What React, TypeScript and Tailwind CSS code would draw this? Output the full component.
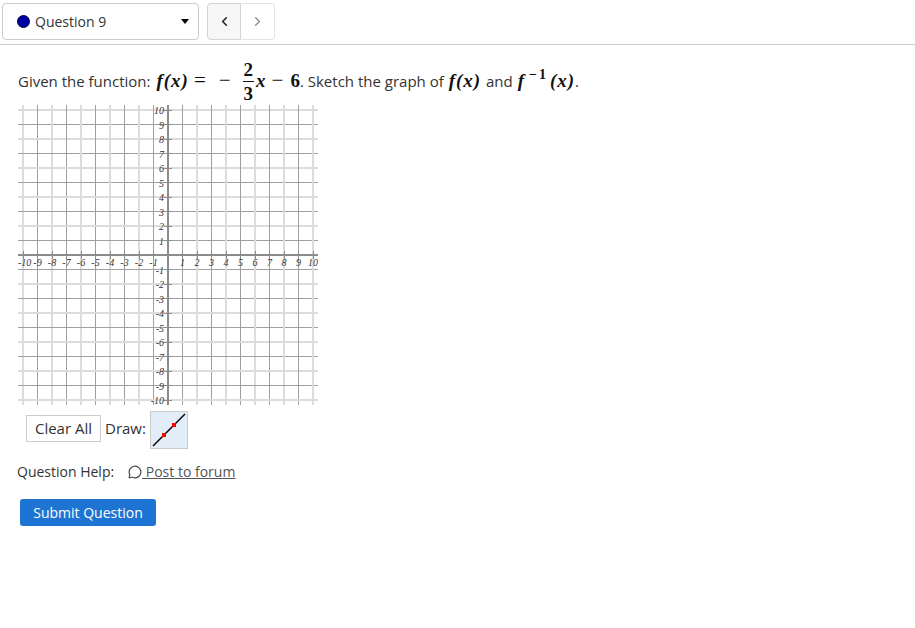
import React from 'react';
import { ChevronLeft, ChevronRight, MessageCircle } from 'lucide-react';

const ticks = Array.from({ length: 21 }, (_, i) => i - 10);

const GraphGrid = () => (
  <svg width="300" height="300" viewBox="0 0 300 300" className="block" shapeRendering="crispEdges">
    {ticks.map((t) => {
      const p = 150 + t * 14.5;
      const even = t % 2 === 0;
      return (
        <g key={t} stroke={even ? '#dcdcdc' : '#a0a0a0'} strokeWidth={even ? 2 : 1}>
          <line x1={p} y1={0} x2={p} y2={300} />
          <line x1={0} y1={p} x2={300} y2={p} />
        </g>
      );
    })}
    <line x1={150} y1={0} x2={150} y2={300} stroke="#8c8c8c" strokeWidth={2} />
    <line x1={0} y1={150} x2={300} y2={150} stroke="#8c8c8c" strokeWidth={2} />
    {/* axis ticks */}
    {ticks.map((t) => {
      const p = 150 + t * 14.5;
      return (
        <g key={t} stroke="#8c8c8c" strokeWidth={1}>
          <line x1={p} y1={146} x2={p} y2={154} />
          <line x1={146} y1={p} x2={154} y2={p} />
        </g>
      );
    })}
    <g fontFamily="'Liberation Serif', serif" fontStyle="italic" fontSize="10" fill="#333">
      {ticks
        .filter((t) => t !== 0)
        .map((t) => (
          <g key={t}>
            <text x={t === -10 ? 0 : 150 + t * 14.5} y={161} textAnchor={t === -10 ? 'start' : 'middle'}>{t}</text>
            <text x={146} y={150 - t * 14.5 + 4} textAnchor="end">{t}</text>
          </g>
        ))}
    </g>
  </svg>
);

const DrawIcon = () => (
  <svg width="36" height="36" viewBox="0 0 36 36">
    <line x1="2" y1="34" x2="34" y2="2" stroke="#000" strokeWidth="1.4" />
    <rect x="11" y="21" width="4" height="4" fill="#f00" />
    <rect x="21" y="11" width="4" height="4" fill="#f00" />
  </svg>
);

const M = ({ children, className = '' }: { children: React.ReactNode; className?: string }) => (
  <span className={`font-['Liberation_Serif',serif] italic font-bold text-[19px] tracking-[1px] text-[#111] ${className}`}>
    {children}
  </span>
);

const Op = ({ children, className = '' }: { children: React.ReactNode; className?: string }) => (
  <span className={`font-['Liberation_Serif',serif] text-[21px] text-[#111] ${className}`}>{children}</span>
);

export default function App() {
  return (
    <div className="min-h-[628px] bg-white font-['Open_Sans','Noto_Sans',sans-serif] text-[15px] text-[#333]">
      {/* Question nav */}
      <div className="flex items-start gap-2 px-[2px] pt-[3px] h-[45px] border-b border-[#ccc]">
        <div className="w-[197px] h-[37px] flex items-center justify-between border border-[#ccc] rounded pl-[14px] pr-[9px]">
          <div className="flex items-center gap-[5px]">
            <span className="w-[13px] h-[13px] rounded-full bg-[#0000a0] border border-[#000050]" />
            <span className="text-[14px]">Question 9</span>
          </div>
          <span className="w-0 h-0 border-x-[4px] border-x-transparent border-t-[5px] border-t-black" />
        </div>
        <div className="flex h-[37px]">
          <div className="w-[34px] flex items-center justify-center bg-[#f7f7f7] border border-[#d4d4d4] rounded-l">
            <ChevronLeft size={15} strokeWidth={2.5} className="text-[#222]" />
          </div>
          <div className="w-[34px] flex items-center justify-center border border-l-0 border-[#e4e4e4] rounded-r">
            <ChevronRight size={15} className="text-[#888]" />
          </div>
        </div>
      </div>

      <div className="pl-[18px] pt-[12px]">
        <div className="flex items-center h-[48px] whitespace-pre">
          <span>Given the function: </span>
          <M className="ml-[2px]">f(x)</M>
          <Op className="ml-[5px]">=</Op>
          <Op className="ml-[13px]">−</Op>
          <span className="inline-flex flex-col items-center font-['Liberation_Serif',serif] font-bold text-[19px] leading-[19px] text-[#111] ml-[12px]">
            <span className="pb-[2px]">2</span>
            <span className="border-t-[1.5px] border-[#111] px-[1px] pt-[2px]">3</span>
          </span>
          <M className="ml-[2px]">x</M>
          <Op className="ml-[5px]">−</Op>
          <span className="font-['Liberation_Serif',serif] font-bold text-[19px] text-[#111] ml-[7px]">6</span>
          <span>. Sketch the graph of </span>
          <M className="ml-[1px]">f(x)</M>
          <span className="ml-[1px]"> and </span>
          <M className="ml-[1px]">f</M>
          <span className="font-['Liberation_Serif',serif] font-bold text-[14px] -translate-y-[7px] text-[#111] tracking-[2px] ml-[4px]">−1</span>
          <M className="ml-[2px]">(x)</M>
          <span>.</span>
        </div>
        <GraphGrid />
      </div>

      <div className="flex items-center pl-[26px] pt-[6px] gap-[4px]">
        <button className="w-[75px] h-[27px] -mt-[4px] border border-[#ccc] bg-white text-[#333]">Clear All</button>
        <span className="-mt-[4px]">Draw:</span>
        <div className="w-[38px] h-[38px] bg-[#e3edf7] border border-[#ccc] flex items-center justify-center">
          <DrawIcon />
        </div>
      </div>

      <div className="flex items-center pl-[17px] pt-[12px] text-[14px]">
        <span>Question Help:</span>
        <MessageCircle size={14} className="ml-[14px] text-[#444]" />
        <span className="underline whitespace-pre text-[#555]"> Post to forum</span>
      </div>

      <button className="ml-[20px] mt-[17px] w-[136px] h-[27px] bg-[#1e74d2] rounded-[3px] text-white text-[14px] block">
        Submit Question
      </button>
    </div>
  );
}
